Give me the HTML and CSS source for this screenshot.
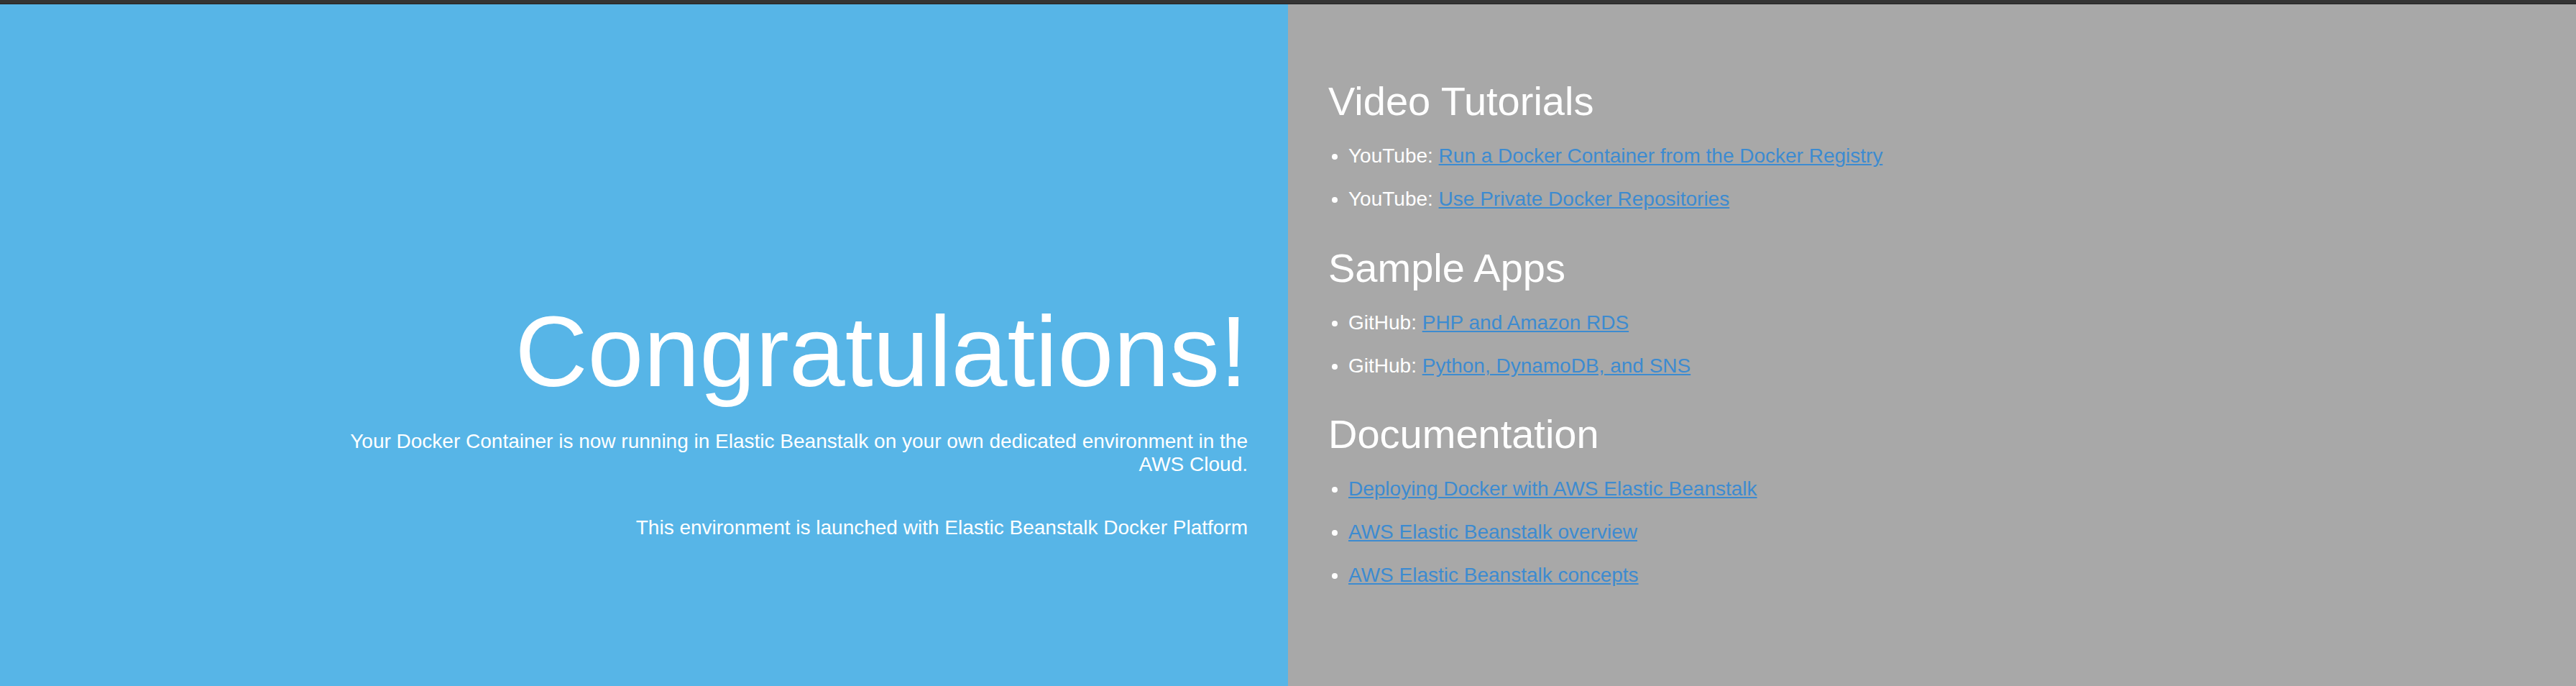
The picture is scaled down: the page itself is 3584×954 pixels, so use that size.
FILE: index.html
```html
<!DOCTYPE html>
<html lang="en">
<head>
<meta charset="utf-8">
<title>Welcome</title>
<link rel="stylesheet" href="styles.css">
</head>
<body>
<div class="topbar"></div>
<div class="page">
  <div class="textColumn">
    <h1>Congratulations!</h1>
    <p>Your Docker Container is now running in Elastic Beanstalk on your own dedicated environment in the AWS Cloud.</p>
    <p>This environment is launched with Elastic Beanstalk Docker Platform</p>
  </div>
  <div class="linksColumn">
    <h2>Video Tutorials</h2>
    <ul>
      <li>YouTube: <a href="#">Run a Docker Container from the Docker Registry</a></li>
      <li>YouTube: <a href="#">Use Private Docker Repositories</a></li>
    </ul>
    <h2>Sample Apps</h2>
    <ul>
      <li>GitHub: <a href="#">PHP and Amazon RDS</a></li>
      <li>GitHub: <a href="#">Python, DynamoDB, and SNS</a></li>
    </ul>
    <h2>Documentation</h2>
    <ul>
      <li><a href="#">Deploying Docker with AWS Elastic Beanstalk</a></li>
      <li><a href="#">AWS Elastic Beanstalk overview</a></li>
      <li><a href="#">AWS Elastic Beanstalk concepts</a></li>
    </ul>
  </div>
</div>
</body>
</html>
```

FILE: styles.css
```css
html, body {
  margin: 0;
  padding: 0;
  height: 100%;
}

body {
  color: #ffffff;
  background-color: #a8a8a8;
  font-family: "Liberation Sans", Arial, sans-serif;
  font-size: 28px;
  display: flex;
  flex-direction: column;
  overflow: hidden;
}

.topbar {
  height: 5px;
  flex: 0 0 5px;
  background-color: #343434;
  border-bottom: 1px solid #242424;
}

.page {
  flex: 1 1 auto;
  display: flex;
}

.textColumn,
.linksColumn {
  box-sizing: border-box;
  width: 50%;
  padding: 56px;
}

.textColumn {
  background-color: #57b5e7;
  text-align: right;
  padding-top: 308px;
}

.textColumn p {
  width: 75%;
  float: right;
  margin: 28px 0;
}

.linksColumn {
  background-color: #a8a8a8;
}

h1 {
  font-size: 140px;
  font-weight: normal;
  margin: 0.67em 0 0;
}

h2 {
  font-size: 56px;
  font-weight: normal;
  margin: 0.83em 0 0;
}

ul {
  padding-left: 28px;
  margin: 0;
}

li {
  margin: 28px 0;
}

a {
  color: #3d8bd0;
}
```
